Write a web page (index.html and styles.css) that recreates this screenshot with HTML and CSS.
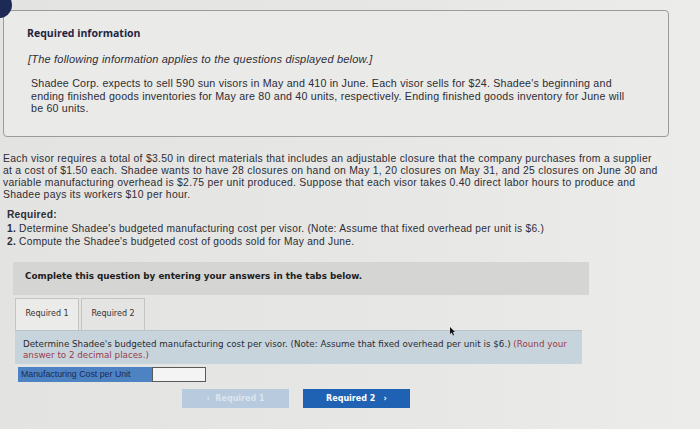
FILE: index.html
```html
<!DOCTYPE html>
<html>
<head>
<meta charset="utf-8">
<link rel="stylesheet" href="styles.css">
</head>
<body>
<div class="badge"></div>
<section class="info">
  <h2 class="info-title">Required information</h2>
  <p class="info-note">[The following information applies to the questions displayed below.]</p>
  <p class="info-text">Shadee Corp. expects to sell 590 sun visors in May and 410 in June. Each visor sells for $24. Shadee's beginning and<br>ending finished goods inventories for May are 80 and 40 units, respectively. Ending finished goods inventory for June will<br>be 60 units.</p>
</section>
<p class="body-text">Each visor requires a total of $3.50 in direct materials that includes an adjustable closure that the company purchases from a supplier<br>at a cost of $1.50 each. Shadee wants to have 28 closures on hand on May 1, 20 closures on May 31, and 25 closures on June 30 and<br>variable manufacturing overhead is $2.75 per unit produced. Suppose that each visor takes 0.40 direct labor hours to produce and<br>Shadee pays its workers $10 per hour.</p>
<div class="required">
  <div class="req-title">Required:</div>
  <div><b>1.</b> Determine Shadee's budgeted manufacturing cost per visor. (Note: Assume that fixed overhead per unit is $6.)</div>
  <div><b>2.</b> Compute the Shadee's budgeted cost of goods sold for May and June.</div>
</div>
<div class="complete">Complete this question by entering your answers in the tabs below.</div>
<div class="tabs">
  <div class="tab active">Required 1</div>
  <div class="tab">Required 2</div>
</div>
<div class="panel">Determine Shadee's budgeted manufacturing cost per visor. (Note: Assume that fixed overhead per unit is $6.) <span class="round">(Round your<br>answer to 2 decimal places.)</span></div>
<div class="answer-row">
  <div class="answer-label">Manufacturing Cost per Unit</div>
  <div class="answer-input"></div>
</div>
<div class="nav">
  <div class="btn btn-prev">&lsaquo;&nbsp;&nbsp;Required 1</div>
  <div class="btn btn-next">Required 2&nbsp;&nbsp;&nbsp;&rsaquo;</div>
</div>
<svg class="cursor" width="6" height="9" viewBox="0 0 6 9"><path d="M0 0 L0 7 L1.8 5.4 L3 8.5 L4 8 L2.9 5 L5 5 Z" fill="#111"/></svg>
</body>
</html>
```
FILE: styles.css
```css
html, body {
  margin: 0;
  padding: 0;
}
body {
  width: 700px;
  height: 429px;
  overflow: hidden;
  position: relative;
  background: linear-gradient(90deg, #e3e3e1 0%, #e7e7e5 60%, #ececea 100%);
  font-family: "Liberation Sans", Arial, sans-serif;
  color: #2d2d36;
}
.badge {
  position: absolute;
  left: -14px;
  top: -8px;
  width: 26px;
  height: 26px;
  border-radius: 50%;
  background: #1d2a55;
}
.info {
  margin: 10px 0 0 3px;
  width: 666px;
  height: 127px;
  box-sizing: border-box;
  border: 1px solid #9b9b9b;
  border-radius: 4px;
  padding: 16px 20px 0 23px;
  background: #eaeae8;
}
.info-title {
  margin: 0;
  font-family: "Open Sans", sans-serif;
  font-size: 10.5px;
  font-weight: 700;
  color: #1f2442;
  line-height: 13px;
}
.info-note {
  margin: 12px 0 0 1px;
  font-size: 11px;
  font-style: italic;
  line-height: 14px;
  letter-spacing: 0.2px;
}
.info-text {
  margin: 11px 0 0 4px;
  font-size: 10.7px;
  line-height: 12.5px;
  letter-spacing: 0.19px;
}
.body-text {
  margin: 16px 0 0 3px;
  font-size: 10.4px;
  line-height: 12px;
  letter-spacing: 0.27px;
}
.required {
  margin: 7px 0 0 7px;
  font-size: 10.2px;
  line-height: 13.5px;
  letter-spacing: 0.26px;
}
.req-title {
  font-weight: 700;
}
.complete {
  margin: 13px 0 0 13px;
  width: 576px;
  height: 33px;
  box-sizing: border-box;
  padding: 0 12px;
  background: #d5d5d3;
  font-family: "DejaVu Sans", Verdana, sans-serif;
  font-weight: 700;
  font-size: 8.8px;
  line-height: 28px;
  color: #1d1d1d;
}
.tabs {
  display: flex;
  gap: 2px;
  margin: 3px 0 0 15px;
}
.tab {
  width: 64px;
  height: 32px;
  box-sizing: border-box;
  border: 1px solid #c4c4c2;
  border-bottom: none;
  background: #e4e4e2;
  font-family: "DejaVu Sans", Verdana, sans-serif;
  font-size: 8px;
  line-height: 30px;
  text-align: center;
  color: #333;
}
.tab.active {
  background: #ebebe9;
}
.panel {
  margin: 0 0 0 15px;
  width: 567px;
  height: 34px;
  box-sizing: border-box;
  padding: 8px 6px 0 8px;
  background: #c8d4dc;
  border-top: 1px solid #b8c4cc;
  font-family: "DejaVu Sans", Verdana, sans-serif;
  font-size: 8.75px;
  line-height: 11px;
  color: #2a2a30;
  white-space: nowrap;
}
.round {
  color: #9a3a4a;
}
.answer-row {
  display: flex;
  margin: 3px 0 0 18px;
  height: 15px;
}
.answer-label {
  width: 134px;
  box-sizing: border-box;
  background: #4d82c3;
  padding-left: 3px;
  font-size: 8.8px;
  line-height: 15px;
  color: #1a2a55;
  white-space: nowrap;
}
.answer-input {
  width: 54px;
  box-sizing: border-box;
  background: #f4f4f4;
  border: 1px solid #5a5a5a;
}
.nav {
  display: flex;
  gap: 14px;
  margin: 7px 0 0 182px;
}
.btn {
  width: 107px;
  height: 19px;
  box-sizing: border-box;
  font-family: "DejaVu Sans", Verdana, sans-serif;
  font-weight: 700;
  font-size: 8px;
  line-height: 19px;
  text-align: center;
}
.btn-prev {
  background: #b8cade;
  color: #dbe5ef;
}
.btn-next {
  background: #1f62b4;
  color: #ffffff;
}
.cursor {
  position: absolute;
  left: 450px;
  top: 327px;
}
```
